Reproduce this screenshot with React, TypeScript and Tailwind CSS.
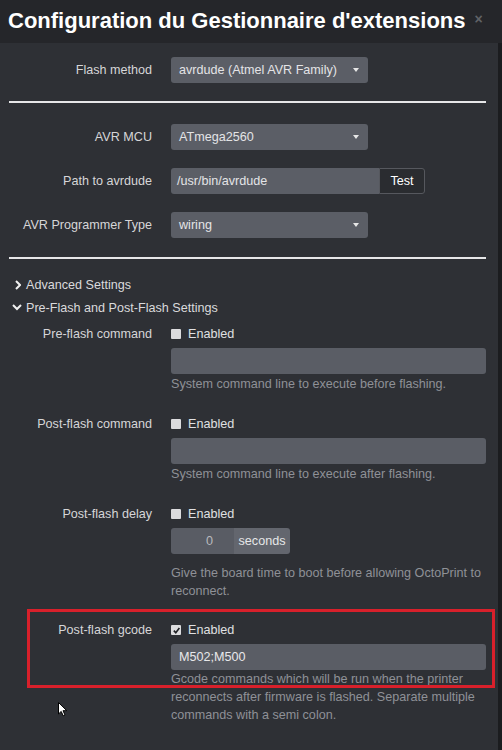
import React from "react";

const font = { fontFamily: '"Liberation Sans", Arial, sans-serif' };

function Caret() {
  return (
    <svg width="6" height="5" viewBox="0 0 6 5" className="shrink-0">
      <path d="M0 0 L6 0 L3 4 Z" fill="#e6e6e6" />
    </svg>
  );
}

function Select({ value }: { value: string }) {
  return (
    <div className="w-[197px] h-[26px] rounded-[3px] bg-[#5b5e66] flex items-center justify-between pl-[8px] pr-[9px] text-[#e4e4e6]">
      <span>{value}</span>
      <Caret />
    </div>
  );
}

function Row({ label, children }: { label: string; children: React.ReactNode }) {
  return (
    <div className="flex items-center">
      <div className="w-[152px] text-right text-[#d6d6d8]">{label}</div>
      <div className="ml-[19px]">{children}</div>
    </div>
  );
}

function Checkbox({ checked }: { checked?: boolean }) {
  return (
    <div className="w-[10px] h-[10px] bg-[#dcdcde] rounded-[1px] flex items-center justify-center">
      {checked && (
        <svg width="9" height="9" viewBox="0 0 10 10">
          <path d="M2 5.2 L4.2 7.4 L8.2 2.2" stroke="#1f2024" strokeWidth="1.8" fill="none" />
        </svg>
      )}
    </div>
  );
}

function CheckRow({ label, checked }: { label: string; checked?: boolean }) {
  return (
    <div className="flex items-center h-[18px]">
      <div className="w-[152px] text-right text-[#d6d6d8]">{label}</div>
      <div className="ml-[19px] flex items-center">
        <Checkbox checked={checked} />
        <span className="ml-[7px] text-[#e0e0e2]">Enabled</span>
      </div>
    </div>
  );
}

function Help({ children }: { children: React.ReactNode }) {
  return <div className="ml-[171px] pr-[14px] text-[#8f9197] leading-[18px]">{children}</div>;
}

function WideInput({ value }: { value?: string }) {
  return (
    <div className="ml-[171px] mr-[12px] h-[26px] rounded-[3px] bg-[#5a5d65] flex items-center pl-[8px] text-[#e8e8ea]">
      {value}
    </div>
  );
}

function Hr() {
  return <div className="ml-[9px] mr-[12px] h-[2px] bg-[#e6e6e8]" />;
}

export default function App() {
  return (
    <div style={font} className="w-[502px] h-[750px] overflow-hidden relative bg-[#2e3035] text-[12.6px] leading-[18px]">
      <div className="h-[43px] bg-[#25262a] flex items-center pl-[8px]">
        <div className="text-[22px] font-bold text-white leading-[26px] pb-[2px]">Configuration du Gestionnaire d'extensions</div>
        <div className="ml-[9px] text-[#606266] font-bold text-[14px] leading-none pb-[6px]">×</div>
      </div>
      <div className="flex h-[707px]">
        <div className="flex-1 flex flex-col">
          <div className="mt-[14px]">
            <Row label="Flash method">
              <Select value="avrdude (Atmel AVR Family)" />
            </Row>
          </div>
          <div className="mt-[18px]">
            <Hr />
          </div>
          <div className="mt-[21px] flex flex-col gap-[18px]">
            <Row label="AVR MCU">
              <Select value="ATmega2560" />
            </Row>
            <Row label="Path to avrdude">
              <div className="flex h-[26px]">
                <div className="w-[208px] rounded-l-[3px] bg-[#5b5e66] flex items-center pl-[6px] text-[#e4e4e6]">/usr/bin/avrdude</div>
                <div className="w-[46px] rounded-r-[3px] border border-[#56585e] bg-[#2a2c30] flex items-center justify-center text-white">Test</div>
              </div>
            </Row>
            <Row label="AVR Programmer Type">
              <Select value="wiring" />
            </Row>
          </div>
          <div className="mt-[19px]">
            <Hr />
          </div>
          <div className="mt-[15px] ml-[15px] flex items-center h-[22px] text-[#dadadc]">
            <svg width="6" height="10" viewBox="0 0 6 10" className="mr-[5px]">
              <path d="M1 1 L5 5 L1 9" stroke="#f0f0f0" strokeWidth="2" fill="none" />
            </svg>
            Advanced Settings
          </div>
          <div className="ml-[12px] flex items-center h-[23px] text-[#dadadc]">
            <svg width="10" height="7" viewBox="0 0 10 7" className="mr-[4px]">
              <path d="M1 1 L5 5 L9 1" stroke="#f0f0f0" strokeWidth="2" fill="none" />
            </svg>
            Pre-Flash and Post-Flash Settings
          </div>

          <div className="mt-[6px]">
            <CheckRow label="Pre-flash command" />
          </div>
          <div className="mt-[5px]">
            <WideInput />
          </div>
          <div className="mt-[1px]">
            <Help>System command line to execute before flashing.</Help>
          </div>

          <div className="mt-[22px]">
            <CheckRow label="Post-flash command" />
          </div>
          <div className="mt-[5px]">
            <WideInput />
          </div>
          <div className="mt-[1px]">
            <Help>System command line to execute after flashing.</Help>
          </div>

          <div className="mt-[22px]">
            <CheckRow label="Post-flash delay" />
          </div>
          <div className="mt-[5px] ml-[171px] flex h-[26px]">
            <div className="w-[63px] rounded-l-[3px] bg-[#595c64] flex items-center justify-end pr-[21px] text-[#b8babe]">0</div>
            <div className="w-[56px] rounded-r-[3px] bg-[#63666e] flex items-center justify-center text-[#e6e6e8]">seconds</div>
          </div>
          <div className="mt-[10px]">
            <Help>Give the board time to boot before allowing OctoPrint to reconnect.</Help>
          </div>

          <div className="mt-[21px]">
            <CheckRow label="Post-flash gcode" checked />
          </div>
          <div className="mt-[5px]">
            <WideInput value="M502;M500" />
          </div>
          <div>
            <Help>
              Gcode commands which will be run when the printer reconnects after firmware is flashed. Separate multiple
              commands with a semi colon.
            </Help>
          </div>
        </div>
        <div className="w-[4px] bg-[#1b1c1f]" />
      </div>

      <div className="absolute left-[27px] top-[609px] w-[468px] h-[79px] border-[3px] border-[#d8202b]" />

      <svg className="absolute left-[58px] top-[702px]" width="10" height="15" viewBox="0 0 10 15">
        <path d="M0.5 0.5 L0.5 12 L3.2 9.4 L5.2 13.8 L7 13 L5 8.7 L8.8 8.7 Z" fill="#ffffff" stroke="#000000" strokeWidth="1" />
      </svg>
    </div>
  );
}
